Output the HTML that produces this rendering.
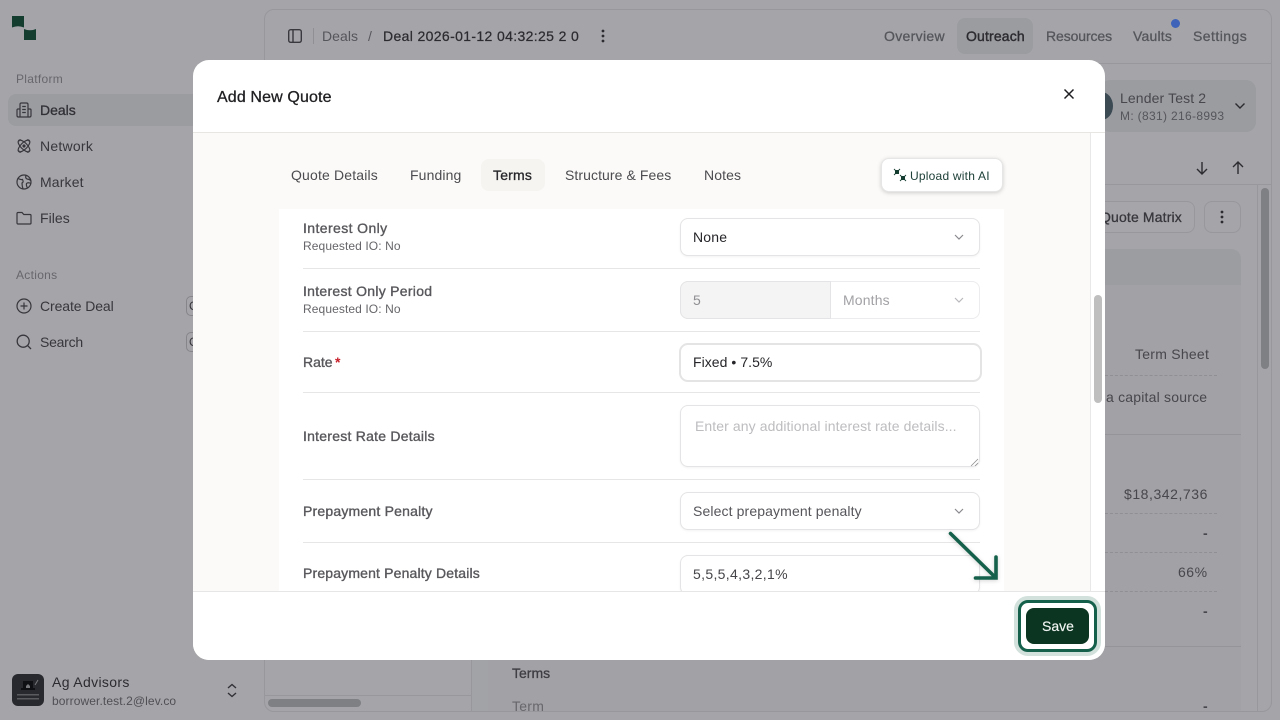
<!DOCTYPE html>
<html><head><meta charset="utf-8"><style>
*{box-sizing:border-box}
html,body{margin:0;padding:0;width:1280px;height:720px;overflow:hidden;background:#a5a5a9;font-family:"Liberation Sans",sans-serif;font-size:14px}
.t{position:absolute;white-space:nowrap;line-height:20px;letter-spacing:.25px}
.b{position:absolute}
svg{position:absolute;overflow:visible}
.med{-webkit-text-stroke:.3px currentColor}
.nav{color:#36363c}
.sec{color:#66666c;font-size:12px;letter-spacing:.3px}
.top{color:#55565c;-webkit-text-stroke:.3px currentColor}
.bgv{color:#47474d;text-align:right}
.lab{color:#58585c;font-size:14px;-webkit-text-stroke:.35px currentColor}
.sub{color:#66666a;font-size:12px;letter-spacing:.05px}
.tab{color:#4c4c50}
.inp{position:absolute;left:680px;width:300px;background:#fff;border:1px solid #e4e4e6;border-radius:8px;box-shadow:0 1px 2px rgba(0,0,0,.05)}
.hr{position:absolute;left:303px;width:677px;height:1px;background:#e6e6e6}
.dash{position:absolute;left:1105px;width:112px;border-top:1px dashed #8f8f94}
</style></head><body>

<!-- Background sidebar -->
<svg style="left:12px;top:16px" width="24" height="24" viewBox="0 0 24 24"><path d="M0 0H12V11.5Q6 9 0 11.5Z M12 24V13Q18 15.5 24 13V24Z" fill="#143d30"/></svg>
<div class="t sec" style="left:16px;top:69px">Platform</div>
<div class="b" style="left:8px;top:94px;width:200px;height:32px;background:#9b9ca0;border-radius:8px"></div>
<svg style="left:16px;top:102px" width="16" height="16" viewBox="0 0 16 16" fill="none" stroke="#36363c" stroke-width="1.2"><path d="M4 15V2.5Q4 1 5.5 1H10.5Q12 1 12 2.5V15Z M4 7H2Q1 7 1 8V13.5Q1 15 2.5 15H13.5Q15 15 15 13.5V8Q15 7 14 7H12 M6.2 4.5H9.8 M6.2 7.5H9.8 M6.2 10.5H9.8"/></svg>
<div class="t nav med" style="left:40px;top:100px;color:#303036;letter-spacing:0">Deals</div>
<svg style="left:16px;top:138px" width="16" height="16" viewBox="0 0 16 16" fill="none" stroke="#36363c" stroke-width="1.2"><g transform="translate(8 8)"><ellipse rx="7.6" ry="3.2" transform="rotate(45)"/><ellipse rx="7.6" ry="3.2" transform="rotate(-45)"/><circle r="1" fill="#36363c"/></g><path d="M3 3.5Q2.5 1.5 5 2 M13 3.5Q13.5 1.5 11 2 M3 12.5Q2.5 14.5 5 14 M13 12.5Q13.5 14.5 11 14"/></svg>
<div class="t nav" style="left:40px;top:136px">Network</div>
<svg style="left:16px;top:174px" width="16" height="16" viewBox="0 0 16 16" fill="none" stroke="#36363c" stroke-width="1.2"><circle cx="8" cy="8" r="7"/><path d="M2 4.5Q5 6 6.5 5.5Q8 8 6 9Q6 12 7 14.8 M10 1.5Q9 4 11 5Q13 5 14.8 6.5 M15 9.5Q12 8 10.5 9.5Q10 11.5 11.5 14"/></svg>
<div class="t nav" style="left:40px;top:172px;letter-spacing:.15px">Market</div>
<svg style="left:16px;top:210px" width="16" height="16" viewBox="0 0 16 16" fill="none" stroke="#36363c" stroke-width="1.2"><path d="M1 3.5Q1 2.5 2 2.5H6L7.8 4.5H14Q15 4.5 15 5.5V13Q15 14 14 14H2Q1 14 1 13Z"/></svg>
<div class="t nav" style="left:40px;top:208px;letter-spacing:.05px">Files</div>
<div class="t sec" style="left:16px;top:265px">Actions</div>
<svg style="left:16px;top:298px" width="16" height="16" viewBox="0 0 16 16" fill="none" stroke="#36363c" stroke-width="1.2"><circle cx="8" cy="8" r="7"/><path d="M8 4.5V11.5 M4.5 8H11.5"/></svg>
<div class="t nav" style="left:40px;top:296px;letter-spacing:-.1px">Create Deal</div>
<div class="b" style="left:186px;top:296px;width:20px;height:20px;border:1px solid #85858a;border-radius:5px"></div>
<div class="t" style="left:189px;top:296px;color:#36363c;font-size:12px">C</div>
<svg style="left:16px;top:334px" width="16" height="16" viewBox="0 0 16 16" fill="none" stroke="#36363c" stroke-width="1.3"><circle cx="7.2" cy="7.2" r="6"/><path d="M11.6 11.6L15 15"/></svg>
<div class="t nav" style="left:40px;top:332px;letter-spacing:-.25px">Search</div>
<div class="b" style="left:186px;top:332px;width:20px;height:20px;border:1px solid #85858a;border-radius:5px"></div>
<div class="t" style="left:189px;top:332px;color:#36363c;font-size:12px">C</div>
<div class="b" style="left:12px;top:674px;width:32px;height:32px;background:#28292e;border-radius:6px"></div>
<svg style="left:12px;top:674px" width="32" height="32" viewBox="0 0 32 32"><path d="M11 7H21V14H23V16H9V14H11Z" fill="#0f1013"/><path d="M16 10L18 12V14H14V12Z" fill="#77787c"/><path d="M23 11L26 6" stroke="#77787c"/><rect x="5" y="20" width="22" height="1.5" fill="#5a5b5f"/><rect x="5" y="24" width="22" height="1.5" fill="#5a5b5f"/></svg>
<div class="t" style="left:52px;top:672px;color:#2b2b30;font-size:14px;letter-spacing:.35px">Ag Advisors</div>
<div class="t" style="left:52px;top:691px;color:#4f4f55;font-size:12px;letter-spacing:.1px">borrower.test.2@lev.co</div>
<svg style="left:226px;top:683px" width="12" height="15" viewBox="0 0 12 15" fill="none" stroke="#303036" stroke-width="1.4"><path d="M2 5L6 1.5L10 5 M2 10L6 13.5L10 10"/></svg>

<!-- Background main panel -->
<div class="b" style="left:264px;top:9px;width:1008px;height:703px;border:1px solid #97979c;border-radius:10px"></div>
<div class="b" style="left:265px;top:63px;width:1006px;height:1px;background:#97979c"></div>
<svg style="left:288px;top:29px" width="14" height="14" viewBox="0 0 14 14" fill="none" stroke="#38383e" stroke-width="1.4"><rect x=".7" y=".7" width="12.6" height="12.6" rx="2"/><path d="M5 .7V13.3"/></svg>
<div class="b" style="left:313px;top:28px;width:1px;height:16px;background:#8f8f94"></div>
<div class="t" style="left:322px;top:26px;color:#55555c;letter-spacing:.05px">Deals</div>
<div class="t" style="left:368px;top:26px;color:#55555c">/</div>
<div class="t" style="left:383px;top:26px;color:#2b2b30;font-size:14px;letter-spacing:.36px;-webkit-text-stroke:.25px currentColor">Deal 2026-01-12 04:32:25 2 0</div>
<svg style="left:601px;top:29px" width="4" height="14" viewBox="0 0 4 14" fill="#2b2b30"><circle cx="2" cy="2" r="1.4"/><circle cx="2" cy="7" r="1.4"/><circle cx="2" cy="12" r="1.4"/></svg>
<div class="t top" style="left:884px;top:26px;letter-spacing:.33px">Overview</div>
<div class="b" style="left:957px;top:18px;width:76px;height:36px;background:#9b9ca0;border-radius:8px"></div>
<div class="t med" style="left:966px;top:26px;color:#2b2b30;letter-spacing:.15px;-webkit-text-stroke:.4px currentColor">Outreach</div>
<div class="t top" style="left:1046px;top:26px;letter-spacing:-.1px">Resources</div>
<div class="t top" style="left:1133px;top:26px;letter-spacing:.2px">Vaults</div>
<div class="b" style="left:1171px;top:19px;width:9px;height:9px;background:#3f63b8;border-radius:50%"></div>
<div class="t top" style="left:1193px;top:26px;letter-spacing:.45px">Settings</div>
<div class="b" style="left:1100px;top:80px;width:156px;height:52px;background:#9b9ca0;border-radius:10px"></div>
<div class="b" style="left:1090px;top:92px;width:23px;height:28px;background:#3c4a54;border-radius:50%"></div>
<div class="t" style="left:1120px;top:88px;color:#47474d;letter-spacing:.12px">Lender Test 2</div>
<div class="t" style="left:1120px;top:106px;color:#55555c;font-size:12px;letter-spacing:.33px">M: (831) 216-8993</div>
<svg style="left:1234px;top:102px" width="12" height="8" viewBox="0 0 12 8" fill="none" stroke="#2b2b30" stroke-width="1.4"><path d="M1.5 1.5L6 6L10.5 1.5"/></svg>
<div class="b" style="left:1105px;top:184px;width:166px;height:1px;background:#97979c"></div>
<svg style="left:1196px;top:161px" width="12" height="14" viewBox="0 0 12 14" fill="none" stroke="#2b2b30" stroke-width="1.4"><path d="M6 1V13 M1 8L6 13L11 8"/></svg>
<svg style="left:1232px;top:161px" width="12" height="14" viewBox="0 0 12 14" fill="none" stroke="#2b2b30" stroke-width="1.4"><path d="M6 13V1 M1 6L6 1L11 6"/></svg>
<div class="b" style="left:1095px;top:201px;width:100px;height:32px;background:#a6a6aa;border:1px solid #97979c;border-radius:8px"></div>
<div class="t med" style="left:1100px;top:207px;color:#36363c;letter-spacing:.15px">Quote Matrix</div>
<div class="b" style="left:1204px;top:201px;width:37px;height:32px;border:1px solid #97979c;border-radius:8px"></div>
<svg style="left:1220px;top:210px" width="4" height="14" viewBox="0 0 4 14" fill="#2b2b30"><circle cx="2" cy="2" r="1.4"/><circle cx="2" cy="7" r="1.4"/><circle cx="2" cy="12" r="1.4"/></svg>
<div class="b" style="left:1257px;top:185px;width:1px;height:526px;background:#97979c"></div>
<div class="b" style="left:1261px;top:188px;width:8px;height:181px;background:#7f8084;border-radius:4px"></div>
<div class="b" style="left:472px;top:640px;width:16px;height:71px;background:#a1a3a6"></div>
<div class="b" style="left:488px;top:249px;width:753px;height:462px;background:#a2a1a5;border-radius:10px 10px 0 0"></div>
<div class="b" style="left:488px;top:249px;width:753px;height:36px;background:#9c9da1;border-radius:10px 10px 0 0"></div>
<div class="t bgv" style="left:1135px;top:344px">Term Sheet</div>
<div class="dash" style="top:375px"></div>
<div class="t bgv" style="left:1106px;top:387px;letter-spacing:.2px">a capital source</div>
<div class="b" style="left:1105px;top:434px;width:136px;height:1px;background:#949499"></div>
<div class="t bgv" style="left:1124px;top:484px;letter-spacing:.55px">$18,342,736</div>
<div class="dash" style="top:513px"></div>
<div class="t bgv" style="left:1203px;top:523px;font-weight:700">-</div>
<div class="dash" style="top:552px"></div>
<div class="t bgv" style="left:1178px;top:562px;letter-spacing:.5px">66%</div>
<div class="dash" style="top:591px"></div>
<div class="t bgv" style="left:1203px;top:601px;font-weight:700">-</div>
<div class="b" style="left:488px;top:646px;width:753px;height:1px;background:#949499"></div>
<div class="t med" style="left:512px;top:663px;color:#3d3d43;letter-spacing:0">Terms</div>
<div class="t" style="left:512px;top:696px;color:#67676c">Term</div>
<div class="t bgv" style="left:1203px;top:696px;font-weight:700">-</div>
<div class="b" style="left:471px;top:640px;width:1px;height:71px;background:#97979c"></div>
<div class="b" style="left:265px;top:695px;width:206px;height:1px;background:#97979c"></div>
<div class="b" style="left:268px;top:699px;width:93px;height:8px;background:#7f8084;border-radius:4px"></div>

<!-- Modal -->
<div class="b" style="left:193px;top:60px;width:912px;height:600px;background:#fff;border-radius:16px;overflow:hidden">
  <div class="b" style="left:0;top:72px;width:912px;height:460px;background:#fbfaf8;border-top:1px solid #e8e6e3"></div>
  <div class="b" style="left:897px;top:73px;width:15px;height:458px;background:#fff;border-left:1px solid #e8e8e8"></div>
  <div class="b" style="left:901px;top:235px;width:8px;height:108px;background:#bfbfbf;border-radius:4px"></div>
  <div class="b" style="left:86px;top:149px;width:725px;height:382px;background:#fff"></div>
  <div class="b" style="left:0;top:531px;width:912px;height:1px;background:#e6e6e6"></div>
</div>
<div class="t med" style="left:217px;top:88px;color:#1f1f22;font-size:16px;letter-spacing:.13px">Add New Quote</div>
<svg style="left:1063px;top:88px" width="12" height="12" viewBox="0 0 12 12" fill="none" stroke="#1f1f22" stroke-width="1.5"><path d="M1.5 1.5L10.5 10.5 M10.5 1.5L1.5 10.5"/></svg>

<!-- Tabs -->
<div class="t tab" style="left:291px;top:165px;letter-spacing:.16px">Quote Details</div>
<div class="t tab" style="left:410px;top:165px;letter-spacing:.12px">Funding</div>
<div class="b" style="left:481px;top:159px;width:64px;height:32px;background:#f6f4f0;border-radius:8px"></div>
<div class="t med" style="left:493px;top:165px;color:#26262a;letter-spacing:.2px">Terms</div>
<div class="t tab" style="left:565px;top:165px;letter-spacing:.08px">Structure &amp; Fees</div>
<div class="t tab" style="left:704px;top:165px;letter-spacing:.1px">Notes</div>
<div class="b" style="left:881px;top:158px;width:122px;height:34px;background:#fff;border:1px solid #e6e6e6;border-radius:8px;box-shadow:0 1px 4px rgba(0,0,0,.18)"></div>
<svg style="left:894px;top:169px" width="12" height="12" viewBox="0 0 12 12" fill="#143d30"><path d="M1 1H5V5H1Z M7 7H11V11H7Z"/><path d="M0 0L1.8 1.8M6 0L4.2 1.8M0 6L1.8 4.2M6 6L7.8 7.8M12 6L10.2 7.8M6 12L7.8 10.2M12 12L10.2 10.2" stroke="#143d30" stroke-width=".9"/></svg>
<div class="t" style="left:910px;top:166px;color:#1e4038;font-size:12px;letter-spacing:.22px">Upload with AI</div>

<!-- Form rows -->
<div class="t lab" style="left:303px;top:218px;letter-spacing:.4px">Interest Only</div>
<div class="t sub" style="left:303px;top:236px;letter-spacing:.1px">Requested IO: No</div>
<div class="inp" style="top:218px;height:38px"></div>
<div class="t" style="left:693px;top:227px;color:#26262a;letter-spacing:.2px">None</div>
<svg style="left:954px;top:234px" width="10" height="6" viewBox="0 0 10 6" fill="none" stroke="#8a8a8e" stroke-width="1.2"><path d="M1 1L5 5L9 1"/></svg>
<div class="hr" style="top:268px"></div>

<div class="t lab" style="left:303px;top:281px;letter-spacing:.28px">Interest Only Period</div>
<div class="t sub" style="left:303px;top:299px;letter-spacing:.1px">Requested IO: No</div>
<div class="inp" style="top:281px;height:38px;border-color:#ececee;box-shadow:none"></div>
<div class="b" style="left:680px;top:281px;width:151px;height:38px;background:#f4f4f4;border:1px solid #e4e4e6;border-radius:8px 0 0 8px"></div>
<div class="t" style="left:693px;top:290px;color:#8f8f93">5</div>
<div class="t" style="left:843px;top:290px;color:#a2a2a6;letter-spacing:.15px">Months</div>
<svg style="left:954px;top:297px" width="10" height="6" viewBox="0 0 10 6" fill="none" stroke="#b8b8bc" stroke-width="1.2"><path d="M1 1L5 5L9 1"/></svg>
<div class="hr" style="top:331px"></div>

<div class="t lab" style="left:303px;top:352px;letter-spacing:0">Rate</div>
<div class="t" style="left:335px;top:352px;color:#c8202a;font-weight:700">*</div>
<div class="inp" style="top:342.5px;height:39px;border:2.5px solid #e4e4e4;box-shadow:none;left:678.5px;width:303px;border-radius:9px"></div>
<div class="t" style="left:693px;top:352px;color:#26262a;letter-spacing:.05px">Fixed • 7.5%</div>
<div class="hr" style="top:392px"></div>

<div class="t lab" style="left:303px;top:426px;letter-spacing:.24px">Interest Rate Details</div>
<div class="inp" style="top:405px;height:62px"></div>
<div class="t" style="left:695px;top:416px;color:#bdbdc0;letter-spacing:.09px">Enter any additional interest rate details...</div>
<svg style="left:970px;top:458px" width="8" height="8" viewBox="0 0 8 8" stroke="#8f8f8f" stroke-width=".8"><path d="M1 8L8 1 M5 8L8 5"/></svg>
<div class="hr" style="top:479px"></div>

<div class="t lab" style="left:303px;top:501px;letter-spacing:.2px">Prepayment Penalty</div>
<div class="inp" style="top:492px;height:38px"></div>
<div class="t" style="left:693px;top:501px;color:#55555a;letter-spacing:.12px">Select prepayment penalty</div>
<svg style="left:954px;top:508px" width="10" height="6" viewBox="0 0 10 6" fill="none" stroke="#8a8a8e" stroke-width="1.2"><path d="M1 1L5 5L9 1"/></svg>
<div class="hr" style="top:542px"></div>

<div class="t lab" style="left:303px;top:563px;letter-spacing:.16px">Prepayment Penalty Details</div>
<div class="inp" style="top:555px;height:40px"></div>
<div class="t" style="left:693px;top:564px;color:#46464a;letter-spacing:.33px">5,5,5,4,3,2,1%</div>
<div class="b" style="left:193px;top:591px;width:912px;height:69px;background:#fff;border-top:1px solid #e6e6e6;border-radius:0 0 16px 16px"></div>

<!-- Arrow and Save -->
<svg style="left:945px;top:528px;filter:drop-shadow(0 1px 2px rgba(0,0,0,.18))" width="58" height="56" viewBox="0 0 58 56" fill="none" stroke="#14604a" stroke-width="3.6" stroke-linecap="round" stroke-linejoin="miter"><path d="M5.5 5.5L50.5 49.5 M51 29V50H30.5"/></svg>
<div class="b" style="left:1014px;top:596px;width:87px;height:60px;border:4px solid #d2e1dc;border-radius:14px"></div>
<div class="b" style="left:1018px;top:600px;width:79px;height:52px;border:3px solid #14604a;border-radius:10px"></div>
<div class="b" style="left:1026px;top:608px;width:63px;height:36px;background:#0b3521;border-radius:8px"></div>
<div class="t med" style="left:1042px;top:616px;color:#f2f5f3;letter-spacing:0;-webkit-text-stroke:.15px currentColor">Save</div>
</body></html>
